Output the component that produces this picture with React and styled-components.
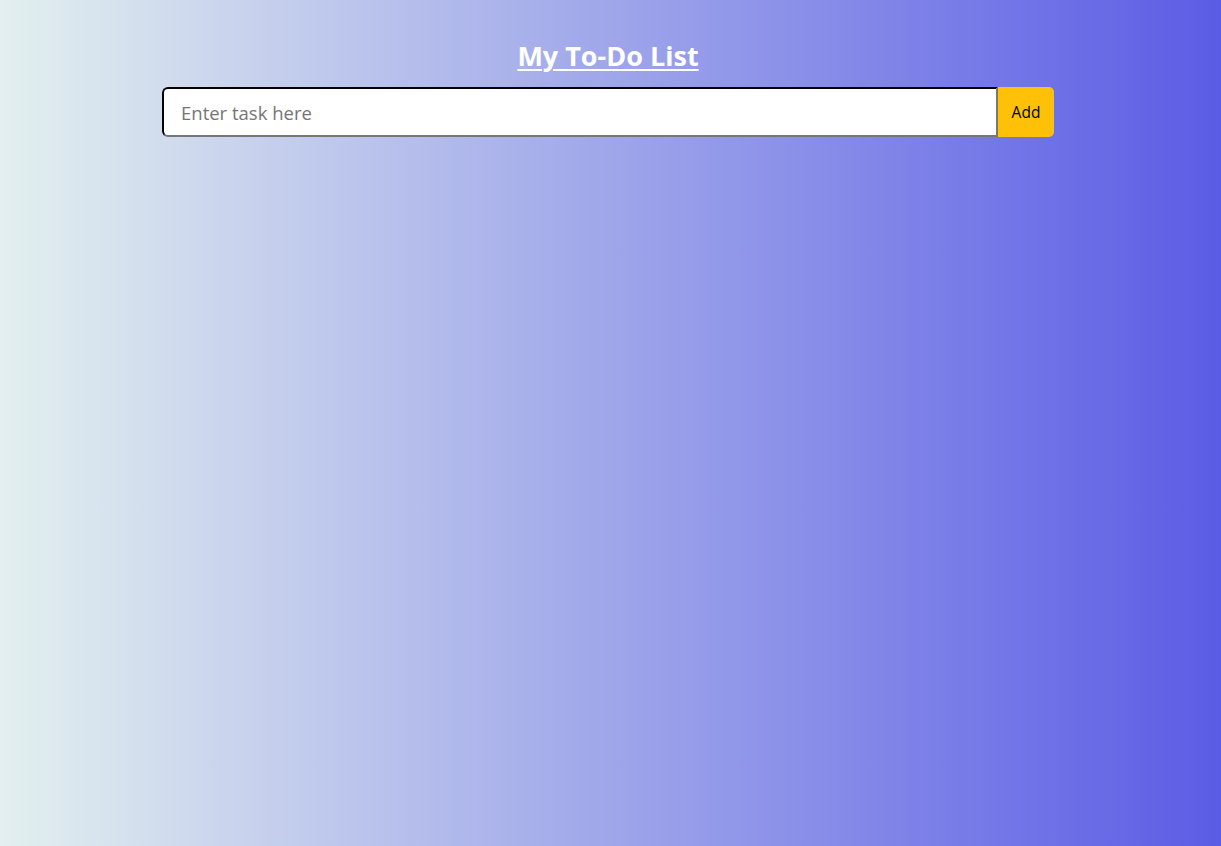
import styled, {createGlobalStyle} from 'styled-components'
import {useState} from 'react'

const Global = createGlobalStyle`
  html, body {
    margin: 0;
    min-height: 100%;
  }
  body {
    min-height: 846px;
    background: linear-gradient(to right, #e3f0ef, #5b5ce5);
    font-family: "Open Sans", "Noto Sans", sans-serif;
  }
`
const Page = styled.div`
  display: flex;
  flex-direction: column;
  align-items: center;
  padding: 37px 5px 0 0;
`
const Title = styled.h1`
  margin: 0 0 13px;
  color: #fff;
  font-size: 27px;
  font-weight: 700;
  text-decoration: underline;
  text-underline-offset: 3px;
  text-decoration-thickness: 2px;
`
const Form = styled.form`
  display: flex;
  width: 892px;
  height: 50px;
`
const Input = styled.input`
  flex: 1;
  box-sizing: border-box;
  height: 100%;
  padding: 0 17px;
  border: 2px inset #767676;
  border-top-color: #1f1f1f;
  border-left-color: #1f1f1f;
  border-radius: 6px 0 0 6px;
  background: #fff;
  font-family: "Open Sans", "Noto Sans", sans-serif;
  font-size: 18.5px;
  color: #212529;
  outline: none;
  &::placeholder {
    color: #757575;
  }
`
const Button = styled.button`
  width: 56px;
  height: 100%;
  border: none;
  border-radius: 0 5px 5px 0;
  background: #ffc107;
  color: #000;
  font-family: "Open Sans", "Noto Sans", sans-serif;
  font-size: 15.5px;
  cursor: pointer;
`

export default function App() {
  const [task, setTask] = useState('')
  const [tasks, setTasks] = useState([])

  const onSubmit = (e) => {
    e.preventDefault()
    if (!task.trim()) return
    setTasks([...tasks, task])
    setTask('')
  }

  return (
    <Page>
      <Global/>
      <Title>My To-Do List</Title>
      <Form onSubmit={onSubmit}>
        <Input value={task} onChange={(e) => setTask(e.target.value)} placeholder="Enter task here"/>
        <Button type="submit">Add</Button>
      </Form>
    </Page>
  )
}
